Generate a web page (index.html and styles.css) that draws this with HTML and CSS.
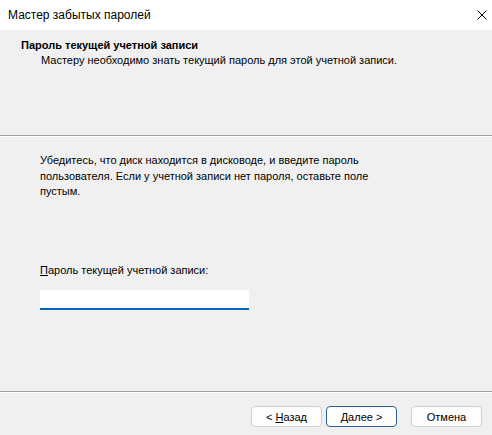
FILE: index.html
```html
<!DOCTYPE html>
<html lang="ru">
  <head>
    <meta charset="UTF-8" />
    <title>Мастер забытых паролей</title>
    <link rel="stylesheet" href="styles.css">
  </head>
  <body>
    <div class="titlebar">
      <span class="title">Мастер забытых паролей</span>
      <button class="close-btn" aria-label="Закрыть">
        <svg width="10" height="10" viewBox="0 0 10 10">
          <path d="M0.5 0.5 L9.5 9.5 M9.5 0.5 L0.5 9.5" stroke="#000" stroke-width="1" fill="none" />
        </svg>
      </button>
    </div>

    <!-- Wizard page header -->
    <div class="wizard-header">
      <div class="header-title">Пароль текущей учетной записи</div>
      <div class="header-sub">Мастеру необходимо знать текущий пароль для этой учетной записи.</div>
    </div>

    <div class="etched"></div>

    <div class="wizard-body">
      <p class="intro">
        Убедитесь, что диск находится в дисководе, и введите пароль<br />
        пользователя. Если у учетной записи нет пароля, оставьте поле<br />
        пустым.
      </p>
      <label class="field-label" for="pwd"><u>П</u>ароль текущей учетной записи:</label>
      <input class="pwd-input" id="pwd" type="password" />
    </div>

    <div class="etched"></div>

    <div class="wizard-footer">
      <button class="btn">&lt; <u>Н</u>азад</button>
      <button class="btn btn-default"><u>Д</u>алее &gt;</button>
      <button class="btn btn-cancel">Отмена</button>
    </div>
  </body>
</html>
```

FILE: styles.css
```css
:root {
  --face: #f0f0f0;
  --line: #a0a0a0;
  --accent: #0067c0;
}

* {
  margin: 0;
  padding: 0;
  box-sizing: border-box;
}

html,
body {
  height: 100%;
  overflow: hidden;
}

body {
  background: var(--face);
  font-family: "Liberation Sans", Arial, sans-serif;
  font-size: 11px;
  color: #000;
  display: flex;
  flex-direction: column;
}

/* Window caption */
.titlebar {
  height: 30px;
  background: #fff;
  display: flex;
  align-items: center;
  justify-content: space-between;
  padding-left: 8px;
}

.title {
  font-size: 12px;
}

.close-btn {
  width: 30px;
  height: 30px;
  border: none;
  background: transparent;
  display: flex;
  align-items: center;
  justify-content: center;
  margin-right: -5px;
}

/* Header area */
.wizard-header {
  height: 105px;
  padding: 8px 0 0 21px;
  line-height: 15px;
}

.header-title {
  font-weight: bold;
}

.header-sub {
  padding-left: 20px;
}

.etched {
  height: 2px;
  border-top: 1px solid var(--line);
  border-bottom: 1px solid #fff;
}

/* Page content */
.wizard-body {
  flex: 1;
  padding: 16px 0 0 40px;
  display: flex;
  flex-direction: column;
  align-items: flex-start;
}

.intro {
  line-height: 15.5px;
}

.field-label {
  margin-top: 63px;
  line-height: 15px;
}

.pwd-input {
  margin-top: 12px;
  width: 209px;
  height: 20px;
  border: none;
  border-bottom: 2px solid var(--accent);
  background: #fff;
  outline: none;
}

/* Button row */
.wizard-footer {
  height: 42px;
  display: flex;
  align-items: flex-start;
  padding: 13px 10px 0 0;
  justify-content: flex-end;
  gap: 4px;
}

.btn {
  width: 71px;
  height: 21px;
  font-family: inherit;
  font-size: 11px;
  background: #fdfdfd;
  border: 1px solid #d0d0d0;
  border-radius: 4px;
  color: #000;
}

.btn-default {
  border-color: #2c6197;
}

.btn-cancel {
  margin-left: 10px;
}
```
